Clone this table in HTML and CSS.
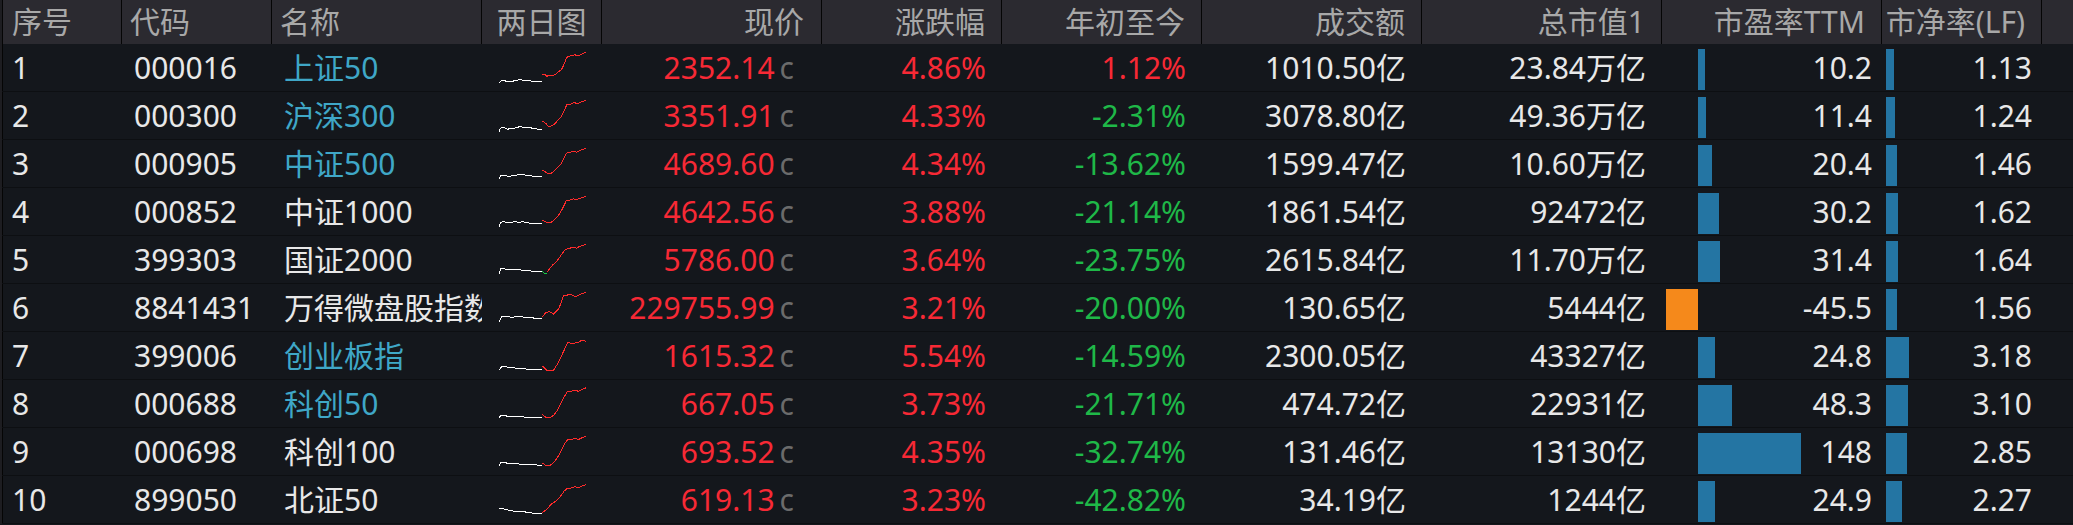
FILE: index.html
```html
<!DOCTYPE html>
<html lang="zh-CN">
<head>
<meta charset="utf-8">
<title>指数行情</title>
<link rel="stylesheet" href="styles.css">
</head>
<body>
<div class="table">
  <div class="row head">
    <div class="c idx">序号</div>
    <div class="c code">代码</div>
    <div class="c name">名称</div>
    <div class="c chart">两日图</div>
    <div class="c num hprice">现价</div>
    <div class="c num">涨跌幅</div>
    <div class="c num">年初至今</div>
    <div class="c num">成交额</div>
    <div class="c num">总市值1</div>
    <div class="c num">市盈率TTM</div>
    <div class="c num">市净率(LF)</div>
    <div class="c filler"></div>
  </div>

  <div class="row">
    <div class="c idx">1</div>
    <div class="c code">000016</div>
    <div class="c name link">上证50</div>
    <div class="c chart"><svg class="spark" viewBox="0 0 88 34" width="88" height="34"><polyline class="w" points="0,32 1.3,30.7 3.3,29.3 5.7,29.3 6.7,30.3 14,30.3 15.7,29.3 19,29 20.7,28.3 22.3,28.7 24,29.3 30.7,29.3 32.3,30.3 43.3,30.3"/><polyline class="r" points="43.3,23.3 45.7,23.3 48,25.3 50,24.3 52,25 54.7,24 57.3,22.7 60.7,19.7 62.7,18.3 64.7,14 66.7,9 68,6.3 70.7,5 73.3,4.7 76,3.7 78,5 80.7,4 83.3,3 84.7,2 87.3,1.3"/></svg></div>
    <div class="c num price up">2352.14<span class="flag">c</span></div>
    <div class="c num up">4.86%</div>
    <div class="c num up">1.12%</div>
    <div class="c num">1010.50亿</div>
    <div class="c num">23.84万亿</div>
    <div class="c pe"><div class="neg"></div><div class="bar" style="width:7px"></div><span class="val">10.2</span></div>
    <div class="c pb"><div class="bar" style="width:8px"></div><span class="val">1.13</span></div>
    <div class="c filler"></div>
  </div>

  <div class="row">
    <div class="c idx">2</div>
    <div class="c code">000300</div>
    <div class="c name link">沪深300</div>
    <div class="c chart"><svg class="spark" viewBox="0 0 88 34" width="88" height="34"><polyline class="w" points="0,32.7 1.3,29.3 4,28.3 6.7,29.3 8.3,30.3 10.7,29.7 15.7,29 20.7,27.7 25.7,28.3 31.3,28.3 34,30 36.7,29.3 39,30.3 43.3,30.3"/><polyline class="r" points="43.3,22 46.7,24.3 49,27 52.3,27 55.7,25 59,21 62.3,17.7 65.7,11 68,5 72.3,5 75.7,3.3 78,5 80.7,3.7 84.7,2 87.3,1"/></svg></div>
    <div class="c num price up">3351.91<span class="flag">c</span></div>
    <div class="c num up">4.33%</div>
    <div class="c num down">-2.31%</div>
    <div class="c num">3078.80亿</div>
    <div class="c num">49.36万亿</div>
    <div class="c pe"><div class="neg"></div><div class="bar" style="width:8px"></div><span class="val">11.4</span></div>
    <div class="c pb"><div class="bar" style="width:9px"></div><span class="val">1.24</span></div>
    <div class="c filler"></div>
  </div>

  <div class="row">
    <div class="c idx">3</div>
    <div class="c code">000905</div>
    <div class="c name link">中证500</div>
    <div class="c chart"><svg class="spark" viewBox="0 0 88 34" width="88" height="34"><polyline class="w" points="0,32 1.5,29 4,28 7,28.7 10,29.5 14,28.5 18,28 22,27.3 26,28 30,28.3 34,29.3 38,29 43.3,29.7"/><polyline class="r" points="43.3,23 46,24.7 49,26.7 52,26.3 55,24.3 58,21.3 61.3,18 64.7,12 67.3,6.3 71,5.3 74.7,4 77.3,5.3 80.7,3.7 84,2.3 87.3,1.3"/></svg></div>
    <div class="c num price up">4689.60<span class="flag">c</span></div>
    <div class="c num up">4.34%</div>
    <div class="c num down">-13.62%</div>
    <div class="c num">1599.47亿</div>
    <div class="c num">10.60万亿</div>
    <div class="c pe"><div class="neg"></div><div class="bar" style="width:14px"></div><span class="val">20.4</span></div>
    <div class="c pb"><div class="bar" style="width:10.5px"></div><span class="val">1.46</span></div>
    <div class="c filler"></div>
  </div>

  <div class="row">
    <div class="c idx">4</div>
    <div class="c code">000852</div>
    <div class="c name">中证1000</div>
    <div class="c chart"><svg class="spark" viewBox="0 0 88 34" width="88" height="34"><polyline class="w" points="0,31.7 1.7,27.3 4.7,26.7 8,27.7 12,27.3 16,26.7 20,27.3 24,26.7 28,27.7 32,28.3 36,28 40,28.7 43.3,28.7"/><polyline class="r" points="43.3,25 46,26.7 49,28 52,27.3 55,25 58.3,21.7 61.3,17.7 64.7,11.3 67.3,5.7 71,5 74.7,3.7 77.3,5 80.7,3.3 84,2.3 87.3,1"/></svg></div>
    <div class="c num price up">4642.56<span class="flag">c</span></div>
    <div class="c num up">3.88%</div>
    <div class="c num down">-21.14%</div>
    <div class="c num">1861.54亿</div>
    <div class="c num">92472亿</div>
    <div class="c pe"><div class="neg"></div><div class="bar" style="width:21px"></div><span class="val">30.2</span></div>
    <div class="c pb"><div class="bar" style="width:11.7px"></div><span class="val">1.62</span></div>
    <div class="c filler"></div>
  </div>

  <div class="row">
    <div class="c idx">5</div>
    <div class="c code">399303</div>
    <div class="c name">国证2000</div>
    <div class="c chart"><svg class="spark" viewBox="0 0 88 34" width="88" height="34"><polyline class="w" points="0,31 2,25.5 6,26 12,27 18,26.5 25,27.5 32,28 38,28.5 43.3,28.7"/><polyline class="g" points="43.3,28.7 45,30 48,30"/><polyline class="r" points="48,29.3 51,25 54,21.7 57,19 60,15.3 63.3,10.3 66.7,6.3 70.7,5.3 74.7,4 77.3,5.3 80.7,3.3 84,2.3 87.3,1"/></svg></div>
    <div class="c num price up">5786.00<span class="flag">c</span></div>
    <div class="c num up">3.64%</div>
    <div class="c num down">-23.75%</div>
    <div class="c num">2615.84亿</div>
    <div class="c num">11.70万亿</div>
    <div class="c pe"><div class="neg"></div><div class="bar" style="width:22px"></div><span class="val">31.4</span></div>
    <div class="c pb"><div class="bar" style="width:11.8px"></div><span class="val">1.64</span></div>
    <div class="c filler"></div>
  </div>

  <div class="row">
    <div class="c idx">6</div>
    <div class="c code">8841431</div>
    <div class="c name">万得微盘股指数</div>
    <div class="c chart"><svg class="spark" viewBox="0 0 88 34" width="88" height="34"><polyline class="w" points="0,30.7 3.2,25 7.7,25.7 14.4,26.3 18.8,25 25.5,26.3 34.5,27 43.3,27"/><polyline class="r" points="43.3,26.3 46.5,21.7 50.1,20.7 54.6,23 60,17.3 64.4,5 71.5,3.3 76.9,5.7 81.4,3.3 87.3,1.3"/></svg></div>
    <div class="c num price up">229755.99<span class="flag">c</span></div>
    <div class="c num up">3.21%</div>
    <div class="c num down">-20.00%</div>
    <div class="c num">130.65亿</div>
    <div class="c num">5444亿</div>
    <div class="c pe"><div class="neg"><div class="bar nbar" style="width:31.6px"></div></div><span class="val">-45.5</span></div>
    <div class="c pb"><div class="bar" style="width:11.2px"></div><span class="val">1.56</span></div>
    <div class="c filler"></div>
  </div>

  <div class="row">
    <div class="c idx">7</div>
    <div class="c code">399006</div>
    <div class="c name link">创业板指</div>
    <div class="c chart"><svg class="spark" viewBox="0 0 88 34" width="88" height="34"><polyline class="w" points="0,31 3.2,27 9.8,28.3 18.8,29.3 30,30.3 43.3,31"/><polyline class="r" points="43.3,27 48,31.7 54.6,31 59,24.3 64.4,12.7 68.8,3.7 73.2,4.3 78.8,3.7 83.3,1 87.3,2.7"/></svg></div>
    <div class="c num price up">1615.32<span class="flag">c</span></div>
    <div class="c num up">5.54%</div>
    <div class="c num down">-14.59%</div>
    <div class="c num">2300.05亿</div>
    <div class="c num">43327亿</div>
    <div class="c pe"><div class="neg"></div><div class="bar" style="width:17.2px"></div><span class="val">24.8</span></div>
    <div class="c pb"><div class="bar" style="width:22.9px"></div><span class="val">3.18</span></div>
    <div class="c filler"></div>
  </div>

  <div class="row">
    <div class="c idx">8</div>
    <div class="c code">000688</div>
    <div class="c name link">科创50</div>
    <div class="c chart"><svg class="spark" viewBox="0 0 88 34" width="88" height="34"><polyline class="w" points="0,31.3 2,28 6,28.7 11,29.7 16,29 22,29.7 28,30.3 34,30 39,30.7 43.3,30.7"/><polyline class="r" points="43.3,27.7 47,30.3 51,30.7 55,28 58.3,23.3 61.7,17 65,10 68.3,4.7 72,4.3 76,3 79.3,4.3 83,2.3 87.3,0.7"/></svg></div>
    <div class="c num price up">667.05<span class="flag">c</span></div>
    <div class="c num up">3.73%</div>
    <div class="c num down">-21.71%</div>
    <div class="c num">474.72亿</div>
    <div class="c num">22931亿</div>
    <div class="c pe"><div class="neg"></div><div class="bar" style="width:33.6px"></div><span class="val">48.3</span></div>
    <div class="c pb"><div class="bar" style="width:22.3px"></div><span class="val">3.10</span></div>
    <div class="c filler"></div>
  </div>

  <div class="row">
    <div class="c idx">9</div>
    <div class="c code">000698</div>
    <div class="c name">科创100</div>
    <div class="c chart"><svg class="spark" viewBox="0 0 88 34" width="88" height="34"><polyline class="w" points="0,30.7 2,27.3 6,27.7 11,28.7 16,28.3 22,29.3 28,29.7 34,29.3 39,30.3 43.3,30.7"/><polyline class="r" points="43.3,28 47,30.7 51,30.3 55,27.3 58.3,22.7 61.7,16.7 65,9.7 68.3,5 72,4.7 76,3.3 79.3,4.7 83,2.7 87.3,1"/></svg></div>
    <div class="c num price up">693.52<span class="flag">c</span></div>
    <div class="c num up">4.35%</div>
    <div class="c num down">-32.74%</div>
    <div class="c num">131.46亿</div>
    <div class="c num">13130亿</div>
    <div class="c pe"><div class="neg"></div><div class="bar" style="width:103px"></div><span class="val">148</span></div>
    <div class="c pb"><div class="bar" style="width:20.5px"></div><span class="val">2.85</span></div>
    <div class="c filler"></div>
  </div>

  <div class="row">
    <div class="c idx">10</div>
    <div class="c code">899050</div>
    <div class="c name">北证50</div>
    <div class="c chart"><svg class="spark" viewBox="0 0 88 34" width="88" height="34"><polyline class="w" points="0,26 3,25.3 7,26.7 11,27.3 15,28.3 20,29 25,28.7 30,29.7 35,30.3 39,30 43.3,31"/><polyline class="r" points="43.3,29.3 46,27.7 49,25 52,21.3 55,19.3 58.3,17 61.7,13 65,8.3 68.3,5.3 72,5 76,3.7 79.3,4.7 83,3 87.3,1.7"/></svg></div>
    <div class="c num price up">619.13<span class="flag">c</span></div>
    <div class="c num up">3.23%</div>
    <div class="c num down">-42.82%</div>
    <div class="c num">34.19亿</div>
    <div class="c num">1244亿</div>
    <div class="c pe"><div class="neg"></div><div class="bar" style="width:17.3px"></div><span class="val">24.9</span></div>
    <div class="c pb"><div class="bar" style="width:16.3px"></div><span class="val">2.27</span></div>
    <div class="c filler"></div>
  </div>
</div>
</body>
</html>
```

FILE: styles.css
```css
* {
  box-sizing: border-box;
}

html, body {
  margin: 0;
  padding: 0;
  background: #14171c;
}

body {
  font-family: "Noto Sans", "Noto Sans CJK SC", sans-serif;
  font-size: 30px;
  color: #e8e8e8;
  width: 2073px;
  height: 525px;
  overflow: hidden;
}

.table {
  padding-left: 2px;
  background: #1d1d21;
}

.row {
  display: grid;
  grid-template-columns: 120px 150px 210px 120px 220px 180px 200px 220px 240px 220px 160px 1fr;
  height: 48px;
  background: #14171c;
  border-bottom: 1px solid #0d0f12;
}

.row.head {
  height: 44px;
  background: #2b2a30;
  color: #a8a8a8;
  border-bottom: none;
}

.c {
  display: flex;
  align-items: center;
  white-space: nowrap;
  overflow: hidden;
  line-height: 1;
  min-width: 0;
}

.head .c {
  border-right: 1px solid #050505;
  padding: 0 16px 0 8px;
}

.head .c.filler {
  border-right: none;
}

.idx {
  border-left: 1px solid #050505;
  padding-left: 8px;
}

.row .idx {
  padding-left: 9px;
}

.row .code,
.row .name {
  padding-left: 12px;
}

.head .code,
.head .name {
  padding-left: 8px;
}

.chart {
  justify-content: center;
}

.head .chart {
  padding: 0;
}

.num {
  justify-content: flex-end;
  padding-right: 16px;
}

.head .num {
  padding-right: 16px;
}

.head .hprice {
  padding-right: 17px;
}

.price {
  padding-right: 28px;
}

.flag {
  color: #6b6b6b;
  margin-left: 5px;
}

.link {
  color: #3fa7c7;
}

.up {
  color: #f72935;
}

.down {
  color: #1fb848;
}

.spark {
  display: block;
  margin: 0 0 0 2px;
  overflow: visible;
}

.spark polyline {
  fill: none;
  stroke-width: 1;
  shape-rendering: crispEdges;
}

.spark .w {
  stroke: #ffffff;
}

.spark .r {
  stroke: #ff2a2a;
}

.spark .g {
  stroke: #19c845;
}

.pe,
.pb {
  align-items: stretch;
  padding-left: 4px;
  padding-right: 10px;
}

.neg {
  width: 32px;
  flex: none;
  display: flex;
  justify-content: flex-end;
}

.bar {
  flex: none;
  background: #2475a3;
  margin: 5px 0 1px;
}

.neg .nbar {
  background: #f5891b;
}

.val {
  margin-left: auto;
  align-self: center;
}
```
